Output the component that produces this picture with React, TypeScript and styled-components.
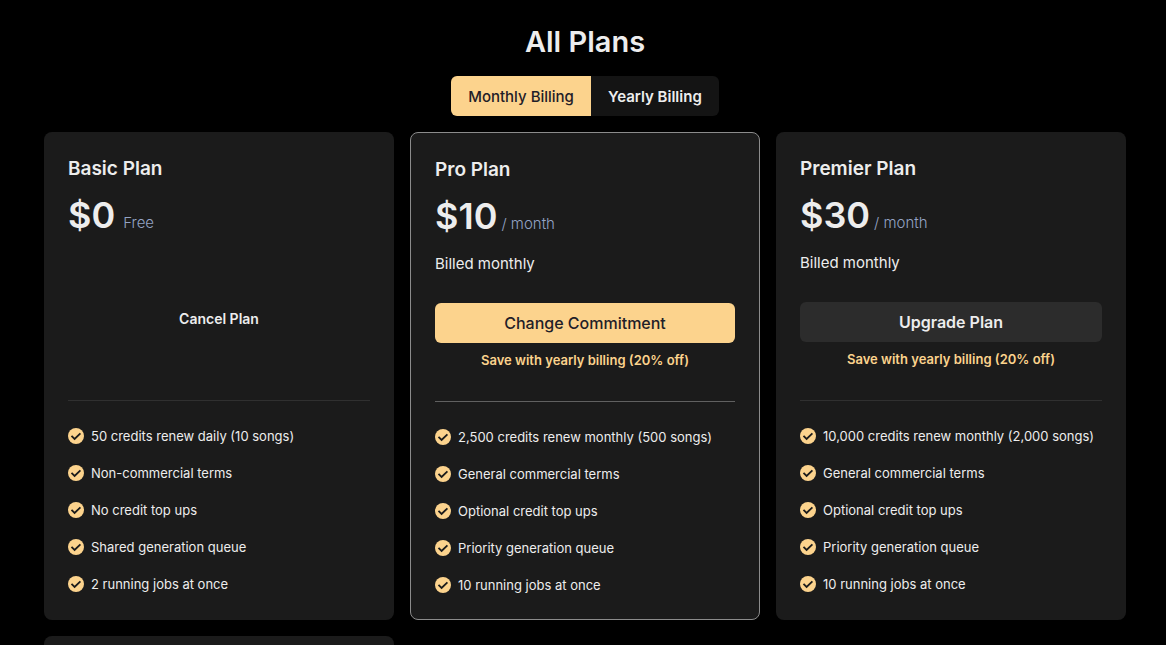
import React, { useState } from 'react';
import styled, { createGlobalStyle } from 'styled-components';

const GlobalStyle = createGlobalStyle`
  *, *::before, *::after { box-sizing: border-box; }
  body {
    margin: 0;
    background: #000;
    color: #ededed;
    font-family: Inter, "Liberation Sans", sans-serif;
    font-size: 15px;
    line-height: 24px;
  }
  h1, h2, p, ul { margin: 0; padding: 0; }
  button { font-family: inherit; cursor: pointer; border: 0; padding: 0; }
`;

const Page = styled.main`
  display: flex;
  flex-direction: column;
  align-items: center;
  gap: 16px;
  height: 100vh;
  overflow: hidden;
  padding: 24px 40px 0 44px;
`;

const Title = styled.h1`
  font-size: 29px;
  line-height: 36px;
  font-weight: 600;
  flex: none;
`;

const Toggle = styled.div`
  display: flex;
  flex: none;
  border-radius: 6px;
  overflow: hidden;
`;

const ToggleButton = styled.button<{ $active: boolean }>`
  height: 40px;
  padding: 0 17px;
  font-size: 15px;
  font-weight: ${(p) => (p.$active ? 500 : 600)};
  background: ${(p) => (p.$active ? '#fcd38d' : '#141414')};
  color: ${(p) => (p.$active ? '#1f2028' : '#ededed')};
`;

const Grid = styled.div`
  display: grid;
  grid-template-columns: repeat(3, minmax(0, 1fr));
  gap: 16px;
  width: 100%;
  flex: none;
`;

const Card = styled.section<{ $current?: boolean }>`
  display: flex;
  flex-direction: column;
  min-height: 240px;
  padding: 24px;
  border-radius: 8px;
  background: #1b1b1b;
  border: ${(p) => (p.$current ? '1px solid #8c8c8c' : '0')};
`;

const PlanName = styled.h2`
  font-size: 19px;
  line-height: 26px;
  font-weight: 600;
`;

const PriceRow = styled.p`
  display: flex;
  align-items: baseline;
  gap: 4px;
  margin-top: 13px;
`;

const Price = styled.span`
  font-size: 36px;
  line-height: 40px;
  font-weight: 600;
`;

const Period = styled.span<{ $spaced: boolean }>`
  padding-left: ${(p) => (p.$spaced ? '4px' : '0')};
  color: #94a3c4;
  font-weight: 300;
`;

const BillingNote = styled.p`
  min-height: 24px;
  margin-top: 16px;
`;

const Action = styled.div`
  display: flex;
  flex-direction: column;
  align-items: center;
  gap: 7px;
  height: 98px;
  margin-top: 27px;
`;

const WideButton = styled.button<{ $primary: boolean }>`
  width: 100%;
  height: 40px;
  border-radius: 6px;
  font-size: 16px;
  font-weight: ${(p) => (p.$primary ? 500 : 600)};
  background: ${(p) => (p.$primary ? '#fcd38d' : '#2c2c2c')};
  color: ${(p) => (p.$primary ? '#1f2028' : '#ededed')};
`;

const TextButton = styled.button`
  height: 32px;
  background: none;
  color: #ededed;
  font-size: 14px;
  font-weight: 600;
`;

const Saving = styled.p`
  color: #fcd38d;
  font-size: 13px;
  line-height: 20px;
  font-weight: 600;
`;

const Features = styled.ul<{ $current: boolean }>`
  display: flex;
  flex-direction: column;
  gap: 17px;
  padding-top: 25px;
  border-top: 1px solid ${(p) => (p.$current ? '#606060' : '#303030')};
  list-style: none;
`;

const Feature = styled.li`
  display: flex;
  align-items: center;
  gap: 7px;
  font-size: 13px;
  line-height: 20px;
  white-space: nowrap;
`;

const CheckIcon = () => (
  <svg width="16" height="16" viewBox="0 0 16 16" aria-hidden="true">
    <circle cx="8" cy="8" r="8" fill="#fcd38d" />
    <path d="M3.5 7.9 6.6 11 12.4 5.3" fill="none" stroke="#1b1b1b" strokeWidth="1.8" />
  </svg>
);

interface Plan {
  name: string;
  price: string;
  period: string;
  note: string;
  action: 'cancel' | 'change' | 'upgrade';
  features: string[];
}

const paidFeatures = [
  'General commercial terms',
  'Optional credit top ups',
  'Priority generation queue',
  '10 running jobs at once',
];

const plans: Plan[] = [
  {
    name: 'Basic Plan',
    price: '$0',
    period: 'Free',
    note: '',
    action: 'cancel',
    features: [
      '50 credits renew daily (10 songs)',
      'Non-commercial terms',
      'No credit top ups',
      'Shared generation queue',
      '2 running jobs at once',
    ],
  },
  {
    name: 'Pro Plan',
    price: '$10',
    period: '/ month',
    note: 'Billed monthly',
    action: 'change',
    features: ['2,500 credits renew monthly (500 songs)', ...paidFeatures],
  },
  {
    name: 'Premier Plan',
    price: '$30',
    period: '/ month',
    note: 'Billed monthly',
    action: 'upgrade',
    features: ['10,000 credits renew monthly (2,000 songs)', ...paidFeatures],
  },
];

const PlanCard = ({ plan }: { plan: Plan }) => {
  const current = plan.action === 'change';
  return (
    <Card $current={current}>
      <PlanName>{plan.name}</PlanName>
      <PriceRow>
        <Price>{plan.price}</Price>
        <Period $spaced={plan.action === 'cancel'}>{plan.period}</Period>
      </PriceRow>
      <BillingNote>{plan.note}</BillingNote>
      <Action>
        {plan.action === 'cancel' ? (
          <TextButton type="button">Cancel Plan</TextButton>
        ) : (
          <>
            <WideButton type="button" $primary={current}>
              {current ? 'Change Commitment' : 'Upgrade Plan'}
            </WideButton>
            <Saving>Save with yearly billing (20% off)</Saving>
          </>
        )}
      </Action>
      <Features $current={current}>
        {plan.features.map((feature) => (
          <Feature key={feature}>
            <CheckIcon />
            {feature}
          </Feature>
        ))}
      </Features>
    </Card>
  );
};

export default function App() {
  const [yearly, setYearly] = useState(false);
  return (
    <>
      <GlobalStyle />
      <Page>
        <Title>All Plans</Title>
        <Toggle>
          <ToggleButton type="button" $active={!yearly} onClick={() => setYearly(false)}>
            Monthly Billing
          </ToggleButton>
          <ToggleButton type="button" $active={yearly} onClick={() => setYearly(true)}>
            Yearly Billing
          </ToggleButton>
        </Toggle>
        <Grid>
          {plans.map((plan) => (
            <PlanCard key={plan.name} plan={plan} />
          ))}
          <Card />
        </Grid>
      </Page>
    </>
  );
}
